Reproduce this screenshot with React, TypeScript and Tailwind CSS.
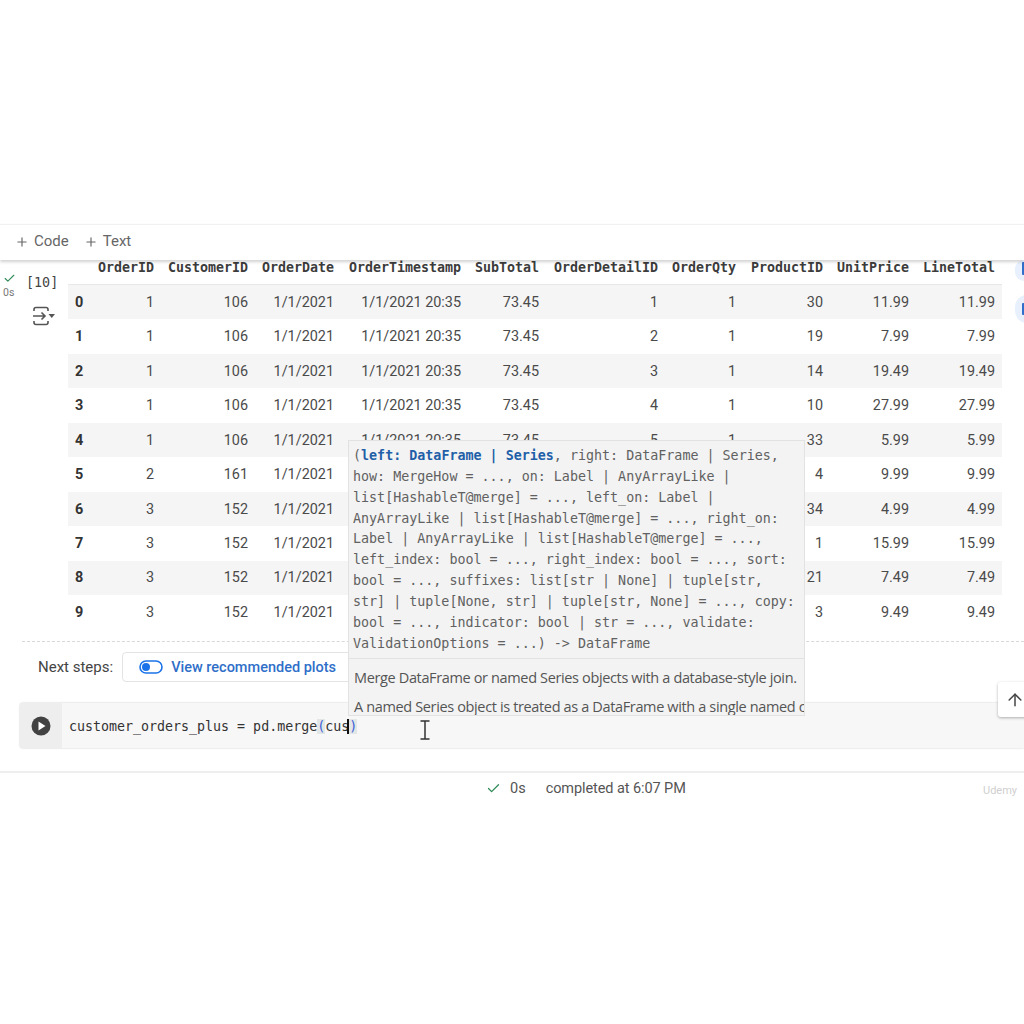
import { Plus, Check, ArrowUp } from "lucide-react";

const mono = "font-['DejaVu_Sans_Mono',monospace]";
const cols = "grid grid-cols-[22px_71px_94px_86px_127px_78px_119px_78px_87px_86px_86px]";

const headers = ["OrderID", "CustomerID", "OrderDate", "OrderTimestamp", "SubTotal", "OrderDetailID", "OrderQty", "ProductID", "UnitPrice", "LineTotal"];

const rows = [
    ["1", "106", "1/1/2021", "1/1/2021 20:35", "73.45", "1", "1", "30", "11.99", "11.99"],
    ["1", "106", "1/1/2021", "1/1/2021 20:35", "73.45", "2", "1", "19", "7.99", "7.99"],
    ["1", "106", "1/1/2021", "1/1/2021 20:35", "73.45", "3", "1", "14", "19.49", "19.49"],
    ["1", "106", "1/1/2021", "1/1/2021 20:35", "73.45", "4", "1", "10", "27.99", "27.99"],
    ["1", "106", "1/1/2021", "1/1/2021 20:35", "73.45", "5", "1", "33", "5.99", "5.99"],
    ["2", "161", "1/1/2021", "1/1/2021 21:20", "9.99", "1", "1", "4", "9.99", "9.99"],
    ["3", "152", "1/1/2021", "1/1/2021 21:44", "44.42", "1", "1", "34", "4.99", "4.99"],
    ["3", "152", "1/1/2021", "1/1/2021 21:44", "44.42", "2", "1", "1", "15.99", "15.99"],
    ["3", "152", "1/1/2021", "1/1/2021 21:44", "44.42", "3", "1", "21", "7.49", "7.49"],
    ["3", "152", "1/1/2021", "1/1/2021 21:44", "44.42", "4", "1", "3", "9.49", "9.49"],
];

function OutputIcon() {
    return (
        <svg width="24" height="20" viewBox="0 0 24 20" fill="none" stroke="#555" strokeWidth="1.6">
            <path d="M2 5V3.5Q2 1.5 4 1.5H14Q16 1.5 16 3.5V5" />
            <path d="M2 15V16.5Q2 18.5 4 18.5H14Q16 18.5 16 16.5V15" />
            <path d="M1 10H13M9.5 6.5L13 10L9.5 13.5" />
            <path d="M16.5 8H23L19.75 12Z" fill="#555" stroke="none" />
        </svg>
    );
}

function ToggleIcon() {
    return (
        <svg width="24" height="14" viewBox="0 0 24 14" fill="none">
            <rect x="1" y="1" width="22" height="12" rx="6" stroke="#1a73e8" strokeWidth="1.6" />
            <circle cx="7" cy="7" r="4" fill="#1a73e8" />
        </svg>
    );
}

function RunIcon() {
    return (
        <svg width="20" height="20" viewBox="0 0 20 20">
            <circle cx="10" cy="10" r="9.5" fill="#424242" />
            <path d="M7.5 5.5L14.5 10L7.5 14.5Z" fill="#fff" />
        </svg>
    );
}

function IBeam() {
    return (
        <svg width="12" height="20" viewBox="0 0 12 20" fill="none" stroke="#333" strokeWidth="1.5">
            <path d="M1.5 1H10.5M1.5 19H10.5M6 1V19" />
        </svg>
    );
}

function Tooltip() {
    return (
        <div className="absolute left-[348px] top-[440px] z-10 h-[276px] w-[457px] overflow-hidden border border-[#e2e2e2] bg-[#f3f3f3]">
            <div className={`${mono} whitespace-pre px-[4px] pt-[5px] pb-[4px] text-[13.35px] leading-[20.85px] text-[#616161]`}>
                <div>
                    (<span className="font-bold text-[#1f5fa8]">left: DataFrame | Series</span>, right: DataFrame | Series,
                </div>
                <div>how: MergeHow = ..., on: Label | AnyArrayLike |</div>
                <div>list[HashableT@merge] = ..., left_on: Label |</div>
                <div>AnyArrayLike | list[HashableT@merge] = ..., right_on:</div>
                <div>Label | AnyArrayLike | list[HashableT@merge] = ...,</div>
                <div>left_index: bool = ..., right_index: bool = ..., sort:</div>
                <div>bool = ..., suffixes: list[str | None] | tuple[str,</div>
                <div>str] | tuple[None, str] | tuple[str, None] = ..., copy:</div>
                <div>bool = ..., indicator: bool | str = ..., validate:</div>
                <div>ValidationOptions = ...) -&gt; DataFrame</div>
            </div>
            <div className="whitespace-pre border-t border-[#e2e2e2] px-[5px] pt-[9px] font-['Open_Sans',sans-serif] text-[14.5px] leading-[20px] tracking-[-0.36px] text-[#555]">
                <div>Merge DataFrame or named Series objects with a database-style join.</div>
                <div className="mt-[9px]">A named Series object is treated as a DataFrame with a single named column.</div>
            </div>
        </div>
    );
}

export default function App() {
    return (
        <div className="relative h-[1024px] w-[1024px] overflow-hidden bg-white font-['Roboto',sans-serif]">
            <div className="h-[224px]" />

            <div className="relative z-[5] flex h-[36px] items-center gap-[15px] border-t border-[#f1f1f1] bg-white pb-[2px] pl-[15px] text-[15px] text-[#666] shadow-[0_2px_3px_rgba(0,0,0,0.18)]">
                <span className="flex items-center gap-[5px]">
                    <Plus size={14} strokeWidth={2} />
                    Code
                </span>
                <span className="flex items-center gap-[5px]">
                    <Plus size={14} strokeWidth={2} />
                    Text
                </span>
            </div>

            <div className="flex">
                <div className="relative w-[68px] shrink-0">
                    <div className="absolute left-[3px] top-[12px] flex flex-col">
                        <Check size={13} strokeWidth={2} className="text-[#2e8b57]" />
                        <span className="mt-[2px] text-[10.5px] leading-[11px] text-[#777]">0s</span>
                    </div>
                    <span className={`${mono} absolute left-[26px] top-[15px] text-[13.4px] leading-[16px] text-[#444]`}>[10]</span>
                    <div className="absolute left-[32px] top-[46px]">
                        <OutputIcon />
                    </div>
                </div>
                <div className="w-[934px]">
                    <div className={`${cols} ${mono} h-[25px] items-start border-b border-[#e8e8e8] text-right text-[13.3px] leading-[15px] font-bold text-[#3c3c3c]`}>
                        <span />
                        {headers.map((h) => (
                            <span key={h} className="pr-[7px]">
                                {h}
                            </span>
                        ))}
                    </div>
                    {rows.map((row, i) => (
                        <div key={i} className={`${cols} h-[34.45px] items-center pt-[1px] text-right text-[14.4px] text-[#4a4a4a] ${i % 2 === 0 ? "bg-[#f5f5f5]" : "bg-white"}`}>
                            <span className="pl-[7px] text-left font-bold text-[#333]">{i}</span>
                            {row.map((v, j) => (
                                <span key={j} className="pr-[7px]">
                                    {v}
                                </span>
                            ))}
                        </div>
                    ))}
                </div>
            </div>

            <div className="ml-[22px] mt-[12px] border-t border-dashed border-[#d8d8d8]" />

            <div className="ml-[38px] mt-[10px] flex h-[30px] items-center gap-[9px]">
                <span className="text-[15px] text-[#444]">Next steps:</span>
                <div className="flex h-[30px] w-[300px] items-center gap-[8px] rounded-[4px] border border-[#e4e4e4] pl-[16px] text-[14.5px] font-medium text-[#2f6fc9]">
                    <ToggleIcon />
                    View recommended plots
                </div>
            </div>

            <div className="ml-[20px] mt-[21px] flex h-[45px] rounded-l-[3px] bg-[#f7f7f7] shadow-[0_0_2px_rgba(0,0,0,0.25)]">
                <div className="flex w-[42px] shrink-0 items-center justify-center bg-[#eeeeee] pt-[1px]">
                    <RunIcon />
                </div>
                <div className="flex flex-1 items-center pl-[7px] pt-[2px]">
                    <div className={`${mono} relative whitespace-pre text-[13.3px] leading-[18px] text-[#333]`}>
                        customer_orders_plus = pd.merge
                        <span className="bg-[#e3e6e6] text-[#3b5fd6]">(</span>
                        cus
                        <span className="-ml-[2px] border-l-2 border-[#111] bg-[#e3e6e6] text-[#3b5fd6]">)</span>
                    </div>
                </div>
            </div>

            <div className="mt-[23px] border-t-2 border-[#eeeeee]" />

            <div className="relative h-[30px]">
                <div className="absolute left-[486px] top-0 flex h-full items-center text-[14.5px] text-[#555]">
                    <Check size={15} strokeWidth={2} className="text-[#2e8b57]" />
                    <span className="ml-[9px]">0s</span>
                    <span className="ml-[20px] tracking-[-0.08px]">completed at 6:07 PM</span>
                </div>
                <span className="absolute left-[983px] top-[10px] text-[11px] text-[#cfcfcf]">Udemy</span>
            </div>

            <Tooltip />

            {/* sidebar tabs peeking in at the right edge */}
            <div className="absolute left-[1015px] top-[260px] flex h-[21px] w-[12px] items-start rounded-l-[9px] bg-[#e8f0fe] pl-[7px] pt-[2px]">
                <div className="h-[13px] w-[5px] rounded-[1px] bg-[#2f6fc9]" />
            </div>
            <div className="absolute left-[1015px] top-[295px] flex h-[28px] w-[12px] items-center rounded-l-[13px] bg-[#e8f0fe] pl-[7px]">
                <div className="h-[12px] w-[5px] rounded-[1px] bg-[#2f6fc9]" />
            </div>

            <div className="absolute left-[998px] top-[682px] z-20 flex h-[35px] w-[30px] items-center rounded-l-[3px] bg-white pl-[7px] shadow-[0_1px_3px_rgba(0,0,0,0.3)]">
                <ArrowUp size={20} strokeWidth={1.8} className="text-[#444]" />
            </div>

            <div className="absolute left-[419px] top-[720px] z-20">
                <IBeam />
            </div>
        </div>
    );
}
